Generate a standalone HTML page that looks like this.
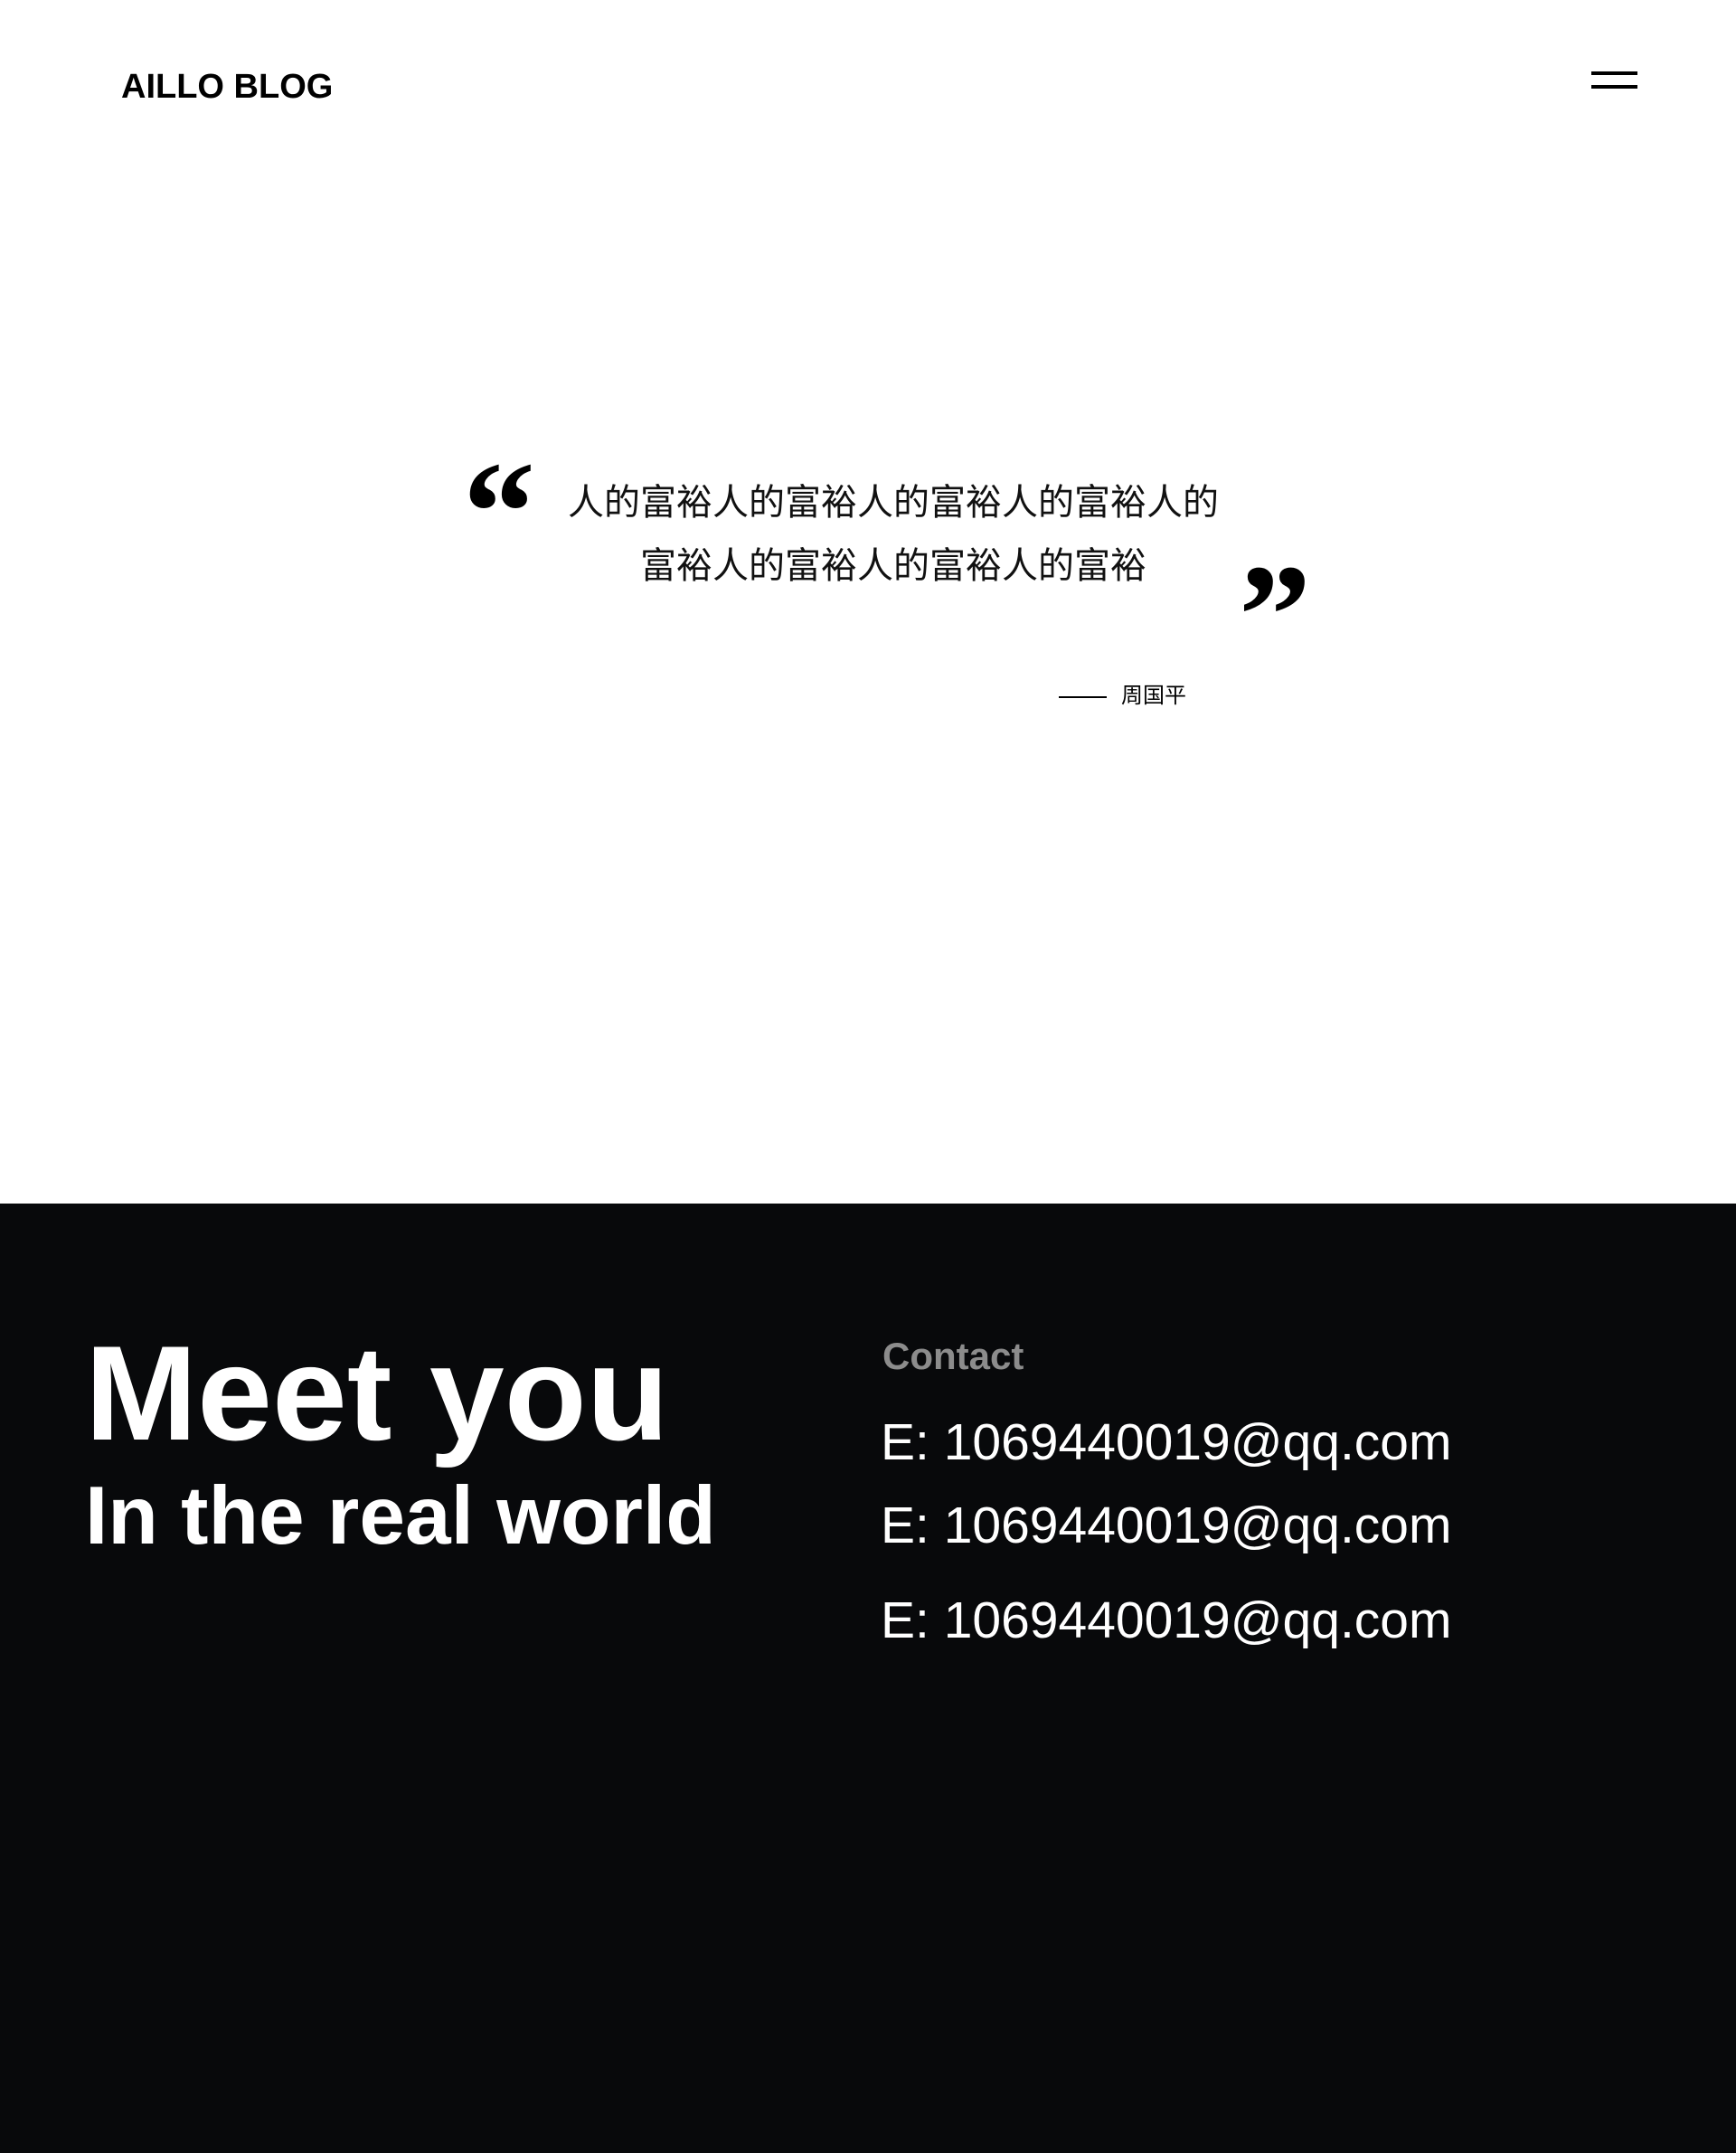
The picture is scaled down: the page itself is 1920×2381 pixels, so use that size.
<!DOCTYPE html>
<html><head><meta charset="utf-8"><style>
html,body{margin:0;padding:0;}
body{width:1920px;height:2381px;position:relative;background:#fff;overflow:hidden;font-family:"Liberation Sans","Noto Sans CJK SC",sans-serif;}
.a{position:absolute;line-height:1;white-space:nowrap;margin:0;}
.dark{position:absolute;left:0;top:1331px;width:1920px;height:1050px;background:#08090b;}
</style></head><body>
<div class="a" style="left:134px;top:77px;font-size:38px;font-weight:bold;color:#000;">AILLO BLOG</div>
<div style="position:absolute;left:1760px;top:79px;width:51px;height:4px;background:#000"></div>
<div style="position:absolute;left:1760px;top:94px;width:51px;height:4px;background:#000"></div>

<div class="a" style="left:512px;top:486px;font-size:160px;font-weight:bold;font-family:'Liberation Serif',serif;">&ldquo;</div>
<div style="position:absolute;left:588px;top:521px;width:800px;text-align:center;font-size:40px;line-height:70px;color:#111;font-family:'Liberation Sans','Noto Sans CJK SC',sans-serif;">人的富裕人的富裕人的富裕人的富裕人的<br>富裕人的富裕人的富裕人的富裕</div>
<div class="a" style="left:1370px;top:600px;font-size:160px;font-weight:bold;font-family:'Liberation Serif',serif;">&rdquo;</div>

<div style="position:absolute;left:1171px;top:770px;width:53px;height:2px;background:#000"></div>
<div class="a" style="left:1240px;top:758px;font-size:24px;color:#000;">周国平</div>

<div class="dark"></div>
<div class="a" style="left:94px;top:1466px;font-size:149px;font-weight:bold;color:#fff;">Meet you</div>
<div class="a" style="left:94px;top:1631px;font-size:91px;font-weight:bold;color:#fff;">In the real world</div>
<div class="a" style="left:976px;top:1479px;font-size:42px;font-weight:bold;color:#8c8c8c;">Contact</div>
<div class="a" style="left:974px;top:1567px;font-size:57px;color:#fff;">E: 1069440019@qq.com</div>
<div class="a" style="left:974px;top:1659px;font-size:57px;color:#fff;">E: 1069440019@qq.com</div>
<div class="a" style="left:974px;top:1764px;font-size:57px;color:#fff;">E: 1069440019@qq.com</div>
</body></html>
